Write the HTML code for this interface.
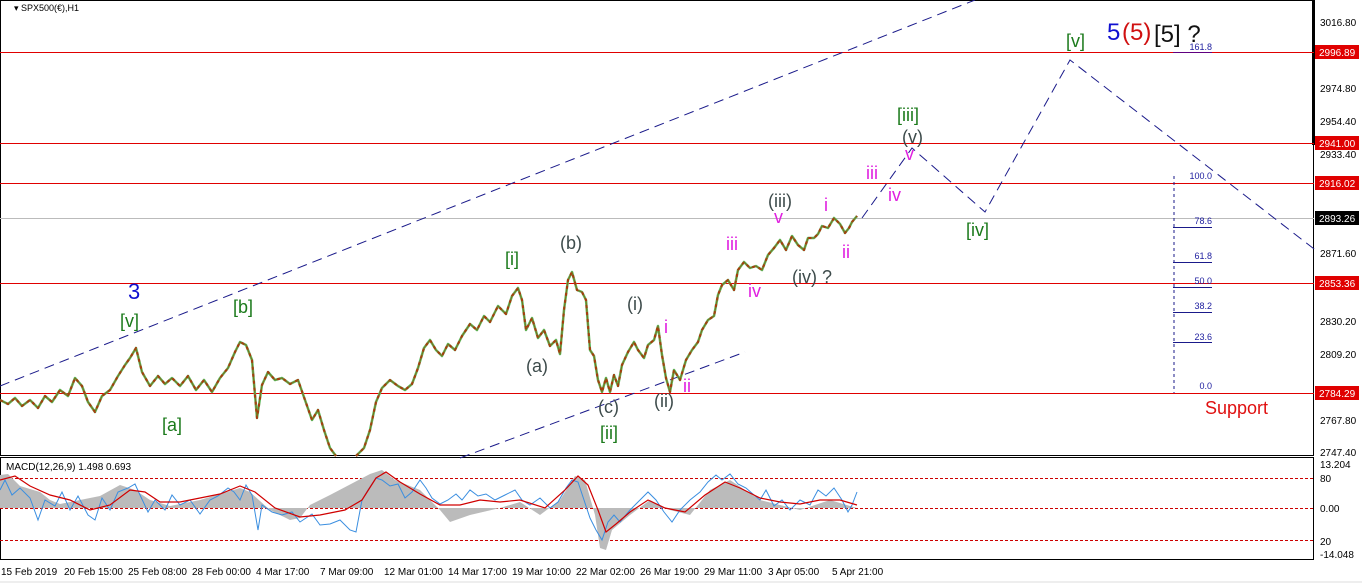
<!DOCTYPE html>
<html><head><meta charset="utf-8"><style>
body{margin:0;background:#fff;width:1362px;height:584px;overflow:hidden;font-family:"Liberation Sans",sans-serif}
svg{display:block}
.l{font-family:"Liberation Sans",sans-serif;font-size:18px}
.g{fill:#1b7a1b}.p{fill:#e020e0}.k{fill:#3d4b4b}
.ax{font-size:10px;fill:#000;font-family:"Liberation Sans",sans-serif}
.fb{font-size:9px;fill:#2020a0;font-family:"Liberation Sans",sans-serif}
</style></head><body>
<svg width="1362" height="584" viewBox="0 0 1362 584">
<defs>
<polyline id="p1" points="0,400 8,404 15,398 22,406 30,400 38,408 45,396 52,402 60,390 68,396 75,378 82,386 88,402 95,412 102,396 110,390 118,376 125,365 130,358 136,348 142,372 150,386 158,376 165,384 172,378 180,386 188,376 196,390 204,380 212,392 220,378 228,368 235,352 240,342 246,345 252,360 257,418 262,385 268,372 275,380 282,378 290,384 298,380 305,400 312,420 318,410 324,430 330,448 336,456"/>
<polyline id="p2" points="356,456 364,448 370,430 376,402 382,388 390,380 398,386 405,390 412,384 418,368 424,348 430,340 436,350 442,356 448,344 455,350 462,336 470,324 477,330 484,316 490,322 498,306 506,314 512,296 518,288 522,300 526,330 532,318 538,338 544,330 550,346 556,340 560,354 564,310 568,280 572,272 577,290 582,292 586,300 590,350 594,356 598,380 602,392 606,378 610,392 614,375 618,386 622,365 628,352 634,342 638,350 644,358 648,345 654,340 658,326 662,355 666,378 670,392 674,370 680,380 686,360 692,350 698,342 702,330 708,320 714,316 718,295 722,285 728,280 734,290 738,270 744,262 750,268 756,266 762,270 768,255 774,248 780,240 786,250 792,236 798,245 804,250 808,238 814,238 818,234 822,226 828,228 834,218 840,224 845,233 849,228 852,222 857,216"/>
</defs>
<rect width="1362" height="584" fill="#fff"/>
<rect x="0.5" y="0.5" width="1313" height="455" fill="none" stroke="#000"/>
<rect x="0.5" y="457.5" width="1313" height="102" fill="none" stroke="#000"/>
<rect x="1312" y="0" width="3" height="145" fill="#000"/>
<line x1="0" y1="582" x2="1362" y2="582" stroke="#ddd"/>
<g fill="#e00000">
<rect x="0" y="52" width="1314" height="1"/>
<rect x="0" y="143" width="1314" height="1"/>
<rect x="0" y="183" width="1314" height="1"/>
<rect x="0" y="283" width="1314" height="1"/>
<rect x="0" y="393" width="1314" height="1"/>
</g>
<rect x="0" y="218" width="1314" height="1" fill="#bbb"/>
<g stroke="#1a1a8a" stroke-dasharray="10,6" fill="none">
<line x1="0" y1="386" x2="975" y2="0"/>
<line x1="460" y1="458" x2="745" y2="352"/>
<polyline points="862,218 912,148 985,212 1070,60 1318,252"/>
<line x1="1174" y1="176" x2="1174" y2="393" stroke-dasharray="3,3"/>
</g>
<g fill="#1a1a8a">
<rect x="1173" y="52" width="39" height="1" fill="#600080"/>
<rect x="1173" y="227" width="39" height="1"/>
<rect x="1173" y="262" width="39" height="1"/>
<rect x="1173" y="287" width="39" height="1"/>
<rect x="1173" y="312" width="39" height="1"/>
<rect x="1173" y="342" width="39" height="1"/>
</g>
<g class="fb" text-anchor="end">
<text x="1212" y="50">161.8</text><text x="1212" y="179">100.0</text>
<text x="1212" y="224">78.6</text><text x="1212" y="259">61.8</text>
<text x="1212" y="284">50.0</text><text x="1212" y="309">38.2</text>
<text x="1212" y="340">23.6</text><text x="1212" y="389">0.0</text>
</g>
<g fill="none" stroke-linejoin="round">
<use href="#p1" stroke="#5cb85c" stroke-width="2.5"/>
<use href="#p2" stroke="#5cb85c" stroke-width="2.5"/>
<use href="#p1" stroke="#c0200a" stroke-width="2" stroke-dasharray="3,4"/>
<use href="#p2" stroke="#c0200a" stroke-width="2" stroke-dasharray="3,4"/>
<use href="#p1" stroke="#8b5a10" stroke-width="0.8"/>
<use href="#p2" stroke="#8b5a10" stroke-width="0.8"/>
</g>
<g class="l">
<text x="128" y="299" style="font-size:22px;fill:#1010d0">3</text>
<text x="120" y="327" class="g">[v]</text>
<text x="233" y="313" class="g">[b]</text>
<text x="162" y="431" class="g">[a]</text>
<text x="505" y="265" class="g">[i]</text>
<text x="560" y="249" class="k">(b)</text>
<text x="526" y="372" class="k">(a)</text>
<text x="598" y="413" class="k">(c)</text>
<text x="600" y="439" class="g">[ii]</text>
<text x="627" y="310" class="k">(i)</text>
<text x="664" y="333" class="p">i</text>
<text x="654" y="407" class="k">(ii)</text>
<text x="683" y="392" class="p">ii</text>
<text x="726" y="250" class="p">iii</text>
<text x="748" y="297" class="p">iv</text>
<text x="768" y="207" class="k">(iii)</text>
<text x="774" y="223" class="p">v</text>
<text x="792" y="283" class="k">(iv) ?</text>
<text x="824" y="211" class="p">i</text>
<text x="842" y="258" class="p">ii</text>
<text x="866" y="179" class="p">iii</text>
<text x="888" y="201" class="p">iv</text>
<text x="897" y="121" class="g">[iii]</text>
<text x="902" y="143" class="k">(v)</text>
<text x="905" y="160" class="p">v</text>
<text x="966" y="236" class="g">[iv]</text>
<text x="1066" y="47" class="g">[v]</text>
<text x="1107" y="40" style="font-size:24px;fill:#1010d0">5</text>
<text x="1122" y="40" style="font-size:24px;fill:#d01010">(5)</text>
<text x="1154" y="42" style="font-size:24px;fill:#111">[5] ?</text>
<text x="1205" y="414" style="fill:#e01010">Support</text>
</g>
<text x="14" y="11" style="font-size:9px" fill="#000">▾ SPX500(€),H1</text>
<g class="ax">
<text x="1320" y="26">3016.80</text><text x="1320" y="92">2974.80</text>
<text x="1320" y="125">2954.40</text><text x="1320" y="158">2933.40</text>
<text x="1320" y="257">2871.60</text><text x="1320" y="325">2830.20</text>
<text x="1320" y="358">2809.20</text><text x="1320" y="424">2767.80</text>
<text x="1320" y="456">2747.40</text>
<text x="1320" y="468">13.204</text><text x="1320" y="482">80</text>
<text x="1320" y="512">0.00</text><text x="1320" y="545">20</text>
<text x="1320" y="558">-14.048</text>
</g>
<g>
<rect x="1315" y="45" width="44" height="14" fill="#e00000"/>
<rect x="1315" y="136" width="44" height="14" fill="#e00000"/>
<rect x="1315" y="176" width="44" height="14" fill="#e00000"/>
<rect x="1315" y="211" width="44" height="14" fill="#000"/>
<rect x="1315" y="276" width="44" height="14" fill="#e00000"/>
<rect x="1315" y="386" width="44" height="14" fill="#e00000"/>
</g>
<g class="ax" style="fill:#fff">
<text x="1319" y="56">2996.89</text><text x="1319" y="147">2941.00</text>
<text x="1319" y="187">2916.02</text><text x="1319" y="222">2893.26</text>
<text x="1319" y="287">2853.36</text><text x="1319" y="397">2784.29</text>
</g>
<g stroke="#c00" stroke-dasharray="3,2">
<line x1="0" y1="478.5" x2="1314" y2="478.5"/>
<line x1="0" y1="508.5" x2="1314" y2="508.5"/>
<line x1="0" y1="540.5" x2="1314" y2="540.5"/>
</g>
<path fill="#bbb" d="M0,508 L0,475 8,474 20,486 40,492 50,500 60,504 80,500 100,496 120,485 135,490 150,500 170,506 200,500 220,494 240,488 250,492 270,510 290,520 300,518 310,505 330,495 370,474 382,470 395,480 420,490 440,510 450,522 470,515 500,508 520,502 540,515 560,500 575,476 585,480 595,515 600,548 606,550 612,530 630,515 650,500 670,510 690,515 710,490 730,480 745,490 760,500 780,505 800,510 830,500 850,506 857,508 Z"/>
<polyline fill="none" stroke="#3a8ee0" stroke-width="1" points="0,490 5,480 12,495 20,488 30,498 38,520 45,500 55,506 62,492 70,510 78,496 88,515 95,520 102,498 110,510 118,492 128,488 135,484 140,495 148,512 155,500 165,510 172,495 180,505 190,500 200,514 210,500 218,496 228,488 234,492 240,500 246,485 252,495 258,530 262,505 272,512 282,515 292,512 300,522 312,514 320,525 330,524 340,520 350,530 356,532 362,500 368,490 376,478 382,480 390,486 398,484 405,498 412,492 420,480 426,488 432,498 440,504 448,500 456,494 462,500 470,490 478,496 486,494 495,500 505,495 515,490 522,500 530,505 540,498 550,508 558,502 566,488 572,480 578,482 584,500 590,518 596,530 602,540 608,522 614,515 620,522 630,510 640,500 648,492 656,500 664,512 672,522 680,510 690,500 700,492 708,482 716,475 722,480 730,474 738,484 746,488 754,495 760,500 766,490 774,506 782,500 790,510 800,500 810,505 818,490 826,496 834,488 842,500 848,512 852,505 857,492"/>
<polyline fill="none" stroke="#d00000" stroke-width="1.2" points="0,480 15,476 30,486 50,495 70,500 90,510 110,505 130,490 145,492 160,502 180,502 200,498 220,494 240,486 255,492 275,508 300,517 320,515 345,510 362,500 376,478 386,472 400,482 420,494 440,505 460,505 480,500 500,502 520,500 545,508 565,490 578,476 588,485 598,510 606,532 616,524 630,512 648,500 665,508 685,512 705,495 725,482 740,488 760,498 780,502 800,504 820,500 840,500 857,505"/>
<text x="6" y="470" style="font-size:10px" fill="#000">MACD(12,26,9) 1.498 0.693</text>
<g class="ax">
<text x="1" y="575">15 Feb 2019</text><text x="64" y="575">20 Feb 15:00</text>
<text x="128" y="575">25 Feb 08:00</text><text x="192" y="575">28 Feb 00:00</text>
<text x="256" y="575">4 Mar 17:00</text><text x="320" y="575">7 Mar 09:00</text>
<text x="384" y="575">12 Mar 01:00</text><text x="448" y="575">14 Mar 17:00</text>
<text x="512" y="575">19 Mar 10:00</text><text x="576" y="575">22 Mar 02:00</text>
<text x="640" y="575">26 Mar 19:00</text><text x="704" y="575">29 Mar 11:00</text>
<text x="768" y="575">3 Apr 05:00</text><text x="832" y="575">5 Apr 21:00</text>
</g>
</svg>
</body></html>
